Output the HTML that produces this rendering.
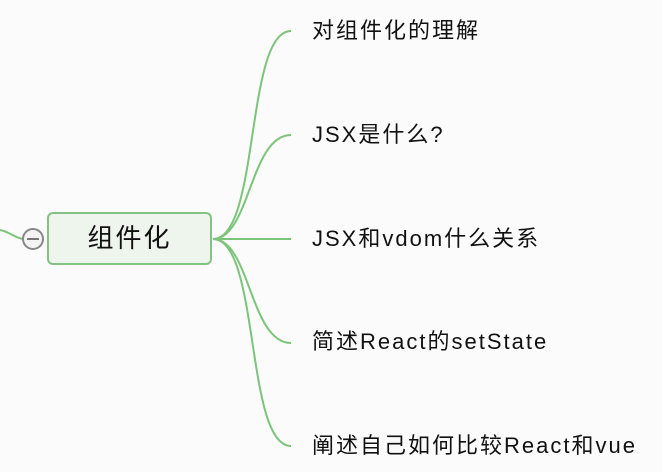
<!DOCTYPE html>
<html><head><meta charset="utf-8"><style>
body{margin:0;width:662px;height:472px;background:#fbfbfb;overflow:hidden;position:relative;font-family:"Liberation Sans","Noto Sans CJK SC",sans-serif;}
.t{position:absolute;left:312px;font-size:22px;letter-spacing:2px;color:#111;white-space:nowrap;line-height:24px;}
.box{position:absolute;left:47px;top:212px;width:165px;height:53px;border:2px solid #82c282;border-radius:6px;background:#eef5ec;box-sizing:border-box;text-align:center;line-height:49px;font-size:26px;letter-spacing:2px;color:#111;}
</style></head><body>
<svg width="662" height="472" style="position:absolute;left:0;top:0">
<g fill="none" stroke="#7cc47a" stroke-width="2">
<path d="M0 230 C10 232,15 238,23 239"/>
<path d="M213 239 C260 239,245 31,291 31"/>
<path d="M213 239 C250 239,250 135,291 135"/>
<path d="M213 239 L291 239"/>
<path d="M213 239 C250 239,250 343,291 343"/>
<path d="M213 239 C260 239,245 446,291 446"/>
</g>
<circle cx="33" cy="239" r="10" fill="#f4f4f4" stroke="#888" stroke-width="2"/>
<line x1="27" y1="239" x2="39" y2="239" stroke="#777" stroke-width="2"/>
</svg>
<div class="box">组件化</div>
<div class="t" style="top:19px">对组件化的理解</div>
<div class="t" style="top:123px">JSX是什么?</div>
<div class="t" style="top:227px">JSX和vdom什么关系</div>
<div class="t" style="top:330px">简述React的setState</div>
<div class="t" style="top:434px">阐述自己如何比较React和vue</div>
</body></html>
